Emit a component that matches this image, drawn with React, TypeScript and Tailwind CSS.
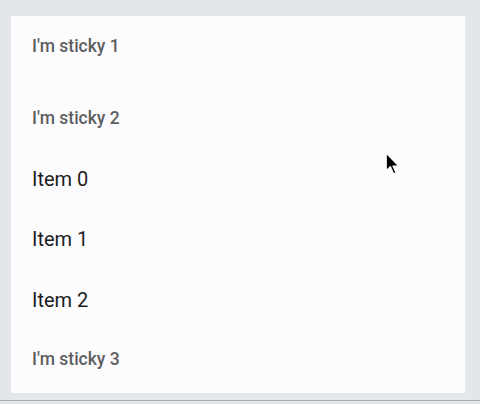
export default function App() {
  const rows: { label: string; sticky: boolean }[] = [
    { label: "I'm sticky 1", sticky: true },
    { label: "I'm sticky 2", sticky: true },
    { label: "Item 0", sticky: false },
    { label: "Item 1", sticky: false },
    { label: "Item 2", sticky: false },
    { label: "I'm sticky 3", sticky: true },
  ]

  return (
    <div className="relative h-[404px] w-[480px] bg-[#e3e6ea] font-['Roboto',sans-serif]">
      <div className="absolute left-0 right-0 top-[400px] h-px bg-[#a7abb0]" />
      <div className="pl-[11px] pt-4">
        <div className="h-[377px] w-[454px] overflow-hidden bg-[#fcfbfe] pl-[21px] pt-px">
          {rows.map((r, i) => (
            <div
              key={r.label}
              className={
                r.sticky
                  ? `flex h-[58px] items-center text-[17.5px] font-medium text-[#5e5e5e] ${i === 0 ? "mb-[14px]" : ""} ${i === 5 ? "pt-[4px]" : ""}`
                  : "flex h-[60.5px] items-center pt-[3px] text-[20px] text-[#1d1d1d]"
              }
            >
              {r.label}
            </div>
          ))}
        </div>
      </div>
      <svg className="absolute left-[385px] top-[152px]" width="17" height="25" viewBox="0 0 16 24">
        <path d="M1 1 L1 18 L5 14 L8 21 L10.5 20 L7.5 13.5 L13 13.5 Z" fill="#000" stroke="#fff" strokeWidth="1.2" strokeLinejoin="round" />
      </svg>
    </div>
  )
}
